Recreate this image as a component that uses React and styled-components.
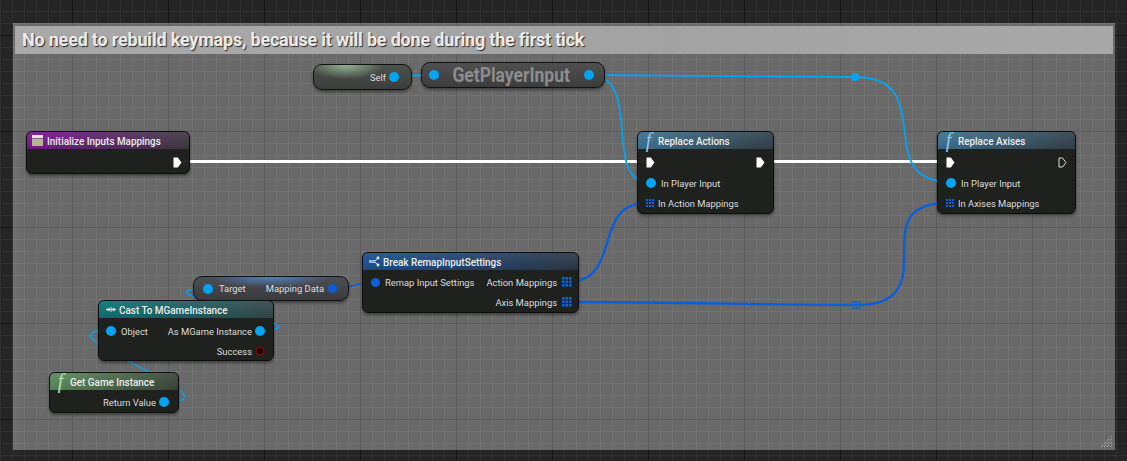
import React from 'react';
import styled, { createGlobalStyle } from 'styled-components';

const dataBlue = '#03a4f4';
const arrayBlue = '#0a5fd8';

const GlobalStyle = createGlobalStyle`
  html, body {
    margin: 0;
    padding: 0;
    background: #252525;
    overflow: hidden;
  }
`;

const Canvas = styled.div`
  position: relative;
  width: 1127px;
  height: 461px;
  overflow: hidden;
  font-family: Roboto, 'Liberation Sans', sans-serif;
  background-color: #252525;
  background-image:
    linear-gradient(90deg, #151515 1px, transparent 1px),
    linear-gradient(180deg, #151515 1px, transparent 1px),
    linear-gradient(90deg, #303030 1px, transparent 1px),
    linear-gradient(180deg, #303030 1px, transparent 1px);
  background-size: 96px 96px, 96px 96px, 12px 12px, 12px 12px;
  background-position: 72px 0, 0 35px, 0 0, 0 11px;
`;

const CommentBox = styled.div`
  position: absolute;
  left: 13px;
  top: 23px;
  width: 1102px;
  height: 427px;
  box-sizing: border-box;
  padding: 3px 2px;
  background-color: #696969;
  background-image:
    linear-gradient(90deg, #5b5b5b 1px, transparent 1px),
    linear-gradient(180deg, #5b5b5b 1px, transparent 1px),
    linear-gradient(90deg, #737373 1px, transparent 1px),
    linear-gradient(180deg, #737373 1px, transparent 1px);
  background-size: 96px 96px, 96px 96px, 12px 12px, 12px 12px;
  background-position: 59px 0, 0 12px, 11px 0, 0 0;
  box-shadow: inset 9px 0 8px -5px rgba(255, 255, 255, 0.07);
`;

const CommentTitle = styled.div`
  height: 28px;
  line-height: 28px;
  padding-left: 7px;
  font-size: 18px;
  font-weight: 700;
  letter-spacing: -0.2px;
  color: #ebebeb;
  text-shadow: 1px 1px 1px #2a2a2a;
  background: linear-gradient(90deg, #a9a9a9, #a2a2a2 60%, #a8a8a8);
`;

const ResizeGrip = styled.svg`
  position: absolute;
  right: 2px;
  bottom: 2px;
`;

const WireLayer = styled.svg`
  position: absolute;
  left: 0;
  top: 0;
`;

const Node = styled.div`
  position: absolute;
  left: ${(p) => p.$x}px;
  top: ${(p) => p.$y}px;
  width: ${(p) => p.$w}px;
  height: ${(p) => p.$h}px;
  box-sizing: border-box;
  display: flex;
  flex-direction: column;
  border: 1px solid #0d0d0d;
  border-radius: 6px;
  background: rgba(28, 30, 28, 0.96);
  box-shadow: 0 2px 3px rgba(0, 0, 0, 0.4);
`;

const Header = styled.div`
  height: 17px;
  flex: none;
  display: flex;
  align-items: center;
  gap: ${(p) => p.$gap || 4}px;
  padding-left: ${(p) => p.$pad || 7}px;
  border-radius: 5px 5px 0 0;
  background:
    linear-gradient(180deg, rgba(255, 255, 255, 0.07), rgba(0, 0, 0, 0.08)),
    linear-gradient(90deg, ${(p) => p.$from}, ${(p) => p.$to});
`;

const HeaderTitle = styled.span`
  padding-top: 1px;
  font-size: 11px;
  font-weight: 500;
  color: #ededed;
  white-space: nowrap;
  transform: scaleX(0.9);
  transform-origin: left center;
`;

const FuncGlyph = styled.span`
  font-family: 'Liberation Serif', serif;
  font-style: italic;
  font-size: 20px;
  line-height: 17px;
  width: 11px;
  text-align: center;
  color: ${(p) => p.$color};
`;

const Body = styled.div`
  flex: 1;
  display: flex;
  flex-direction: column;
  padding-top: ${(p) => p.$top ?? 3}px;
`;

const Row = styled.div`
  height: ${(p) => p.$h || 20}px;
  flex: none;
  display: flex;
  align-items: center;
  justify-content: space-between;
  padding: 0 ${(p) => p.$right ?? 8}px 0 ${(p) => p.$left ?? 8}px;
`;

const Side = styled.div`
  display: flex;
  align-items: center;
  gap: ${(p) => p.$gap ?? 5}px;
  margin-left: ${(p) => (p.$end ? 'auto' : '0')};
`;

const Label = styled.span`
  font-size: 9.4px;
  color: #dedede;
  white-space: nowrap;
`;

const Pin = styled.span`
  display: block;
  flex: none;
  width: ${(p) => p.$size || 10}px;
  height: ${(p) => p.$size || 10}px;
  border-radius: 50%;
  background: ${(p) => p.$color || dataBlue};
`;

const RingPin = styled(Pin)`
  box-sizing: border-box;
  background: #1a0505;
  border: 2px solid #6b0c0c;
`;

const Pure = styled.div`
  position: absolute;
  left: ${(p) => p.$x}px;
  top: ${(p) => p.$y}px;
  width: ${(p) => p.$w}px;
  height: ${(p) => p.$h}px;
  box-sizing: border-box;
  display: flex;
  align-items: center;
  justify-content: space-between;
  padding: 0 ${(p) => p.$right || 7}px 0 ${(p) => p.$left || 7}px;
  border: 1px solid #111;
  border-radius: 9px;
  box-shadow: 0 2px 3px rgba(0, 0, 0, 0.4);
  background: ${(p) => p.$bg};
`;

const PureTitle = styled.span`
  font-size: 20px;
  font-weight: 700;
  color: #8d8d8d;
  white-space: nowrap;
  transform: scaleX(0.875);
`;

function ExecPin({ hollow }) {
  return (
    <svg width="9" height="11" viewBox="0 0 9 11" style={{ flex: 'none' }}>
      <path
        d={hollow ? 'M1 1H4.5L8 5.5L4.5 10H1Z' : 'M.5 .5H4.8L8.5 5.5L4.8 10.5H.5Z'}
        fill={hollow ? 'none' : '#fff'}
        stroke={hollow ? '#ddd' : 'none'}
        strokeWidth="1"
      />
    </svg>
  );
}

function ArrayPin({ wide }) {
  const cells = wide ? [0, 3.5, 7] : [0, 3, 6];
  const size = wide ? 10 : 8;
  return (
    <svg width={size} height={size} viewBox={`0 0 ${size} ${size}`} style={{ flex: 'none' }}>
      {cells.map((y) =>
        cells.map((x) => (
          <rect key={`${x}-${y}`} x={x} y={y} width={wide ? 2.6 : 2} height={wide ? 2.6 : 2} fill="#0d62dc" />
        ))
      )}
    </svg>
  );
}

function EventIcon() {
  return (
    <svg width="11" height="11" viewBox="0 0 11 11">
      <rect width="11" height="3" fill="#e8e4d4" />
      <rect y="3.6" width="11" height="7.4" fill="#b8b292" />
    </svg>
  );
}

function BreakIcon() {
  return (
    <svg width="11" height="11" viewBox="0 0 11 11">
      <path d="M0 4h6v3H0Z" fill="#8fb0dc" />
      <circle cx="9" cy="2" r="1.4" fill="#e4ecf6" />
      <circle cx="9" cy="9" r="1.4" fill="#e4ecf6" />
      <path d="M6 5L8.4 2.4M6 6L8.4 8.6" stroke="#e4ecf6" fill="none" />
    </svg>
  );
}

function CastIcon() {
  return (
    <svg width="10" height="7" viewBox="0 0 12 7">
      <path d="M0 2.5H3V1L6 3.5L3 6V4.5H0Z" fill="#eee" />
      <path d="M6.5 2.5H9V1L12 3.5L9 6V4.5H6.5Z" fill="#eee" />
      <rect x="5.6" y="0.5" width="1" height="6" fill="#eee" />
    </svg>
  );
}

function Wires() {
  return (
    <WireLayer width="1127" height="461" viewBox="0 0 1127 461" fill="none">
      <g stroke="#fff" strokeWidth="3">
        <path d="M183 161.5H646" />
        <path d="M771 161.5H946" />
      </g>
      <g stroke={dataBlue} strokeWidth="1.8">
        <path d="M394 76C410 76 418 75 434 75" />
        <path d="M589 75C700 75 760 77 855 77" />
        <path d="M855 77C940 77 870 182 950 182" />
        <path d="M589 75C645 75 600 183 651 183" />
        <path d="M165 402C250 402 25 330 110 330" strokeWidth="1.4" />
        <path d="M259 330C345 330 120 289 206 289" strokeWidth="1.4" />
      </g>
      <g stroke={arrayBlue} strokeWidth="2.4">
        <path d="M566 282C625 282 590 203 647 203" />
        <path d="M566 302C690 302 760 305 856 305" />
        <path d="M856 305C950 305 860 203 947 203" />
        <path d="M333 289C352 289 355 282 373 282" strokeWidth="1.6" />
      </g>
      <circle cx="855" cy="77" r="4" fill={dataBlue} />
      <g fill="#0d62dc">
        {[301, 304, 307].map((y) =>
          [852, 855, 858].map((x) => <rect key={`${x}-${y}`} x={x} y={y} width="2.2" height="2.2" />)
        )}
      </g>
    </WireLayer>
  );
}

export default function App() {
  return (
    <Canvas>
      <GlobalStyle />
      <CommentBox>
        <CommentTitle>No need to rebuild keymaps, because it will be done during the first tick</CommentTitle>
        <ResizeGrip width="12" height="12" viewBox="0 0 12 12">
          <path d="M0 11L11 0M3 11L11 3M6 11L11 6M9 11L11 9" stroke="#c8c8c8" strokeWidth="1" strokeDasharray="1 1" />
        </ResizeGrip>
      </CommentBox>

      <Wires />

      <Node $x={26} $y={131} $w={164} $h={43}>
        <Header $from="#7a1690" $to="#3f3a42" $pad={5}>
          <EventIcon />
          <HeaderTitle>Initialize Inputs Mappings</HeaderTitle>
        </Header>
        <Body $top={3}>
          <Row $right={7}>
            <Side $end>
              <ExecPin />
            </Side>
          </Row>
        </Body>
      </Node>

      <Pure
        $x={313}
        $y={64}
        $w={99}
        $h={26}
        $right={12}
        $bg="radial-gradient(ellipse 38px 14px at 33% 0, #93b293, transparent), linear-gradient(180deg, #4c524c, #3b3d3b)"
      >
        <span />
        <Side $gap={3}>
          <Label>Self</Label>
          <Pin />
        </Side>
      </Pure>

      <Pure $x={421} $y={62} $w={184} $h={26} $left={7} $right={10} $bg="linear-gradient(180deg, #505050, #3c3c3c)">
        <Pin />
        <PureTitle>GetPlayerInput</PureTitle>
        <Pin />
      </Pure>

      <Node $x={637} $y={131} $w={137} $h={83}>
        <Header $from="#3d7291" $to="#33424c" $gap={4} $pad={5}>
          <FuncGlyph $color="#8fc6ea">f</FuncGlyph>
          <HeaderTitle>Replace Actions</HeaderTitle>
        </Header>
        <Body>
          <Row $h={21}>
            <ExecPin />
            <ExecPin />
          </Row>
          <Row>
            <Side>
              <Pin />
              <Label>In Player Input</Label>
            </Side>
          </Row>
          <Row>
            <Side $gap={4}>
              <ArrayPin />
              <Label>In Action Mappings</Label>
            </Side>
          </Row>
        </Body>
      </Node>

      <Node $x={937} $y={131} $w={139} $h={83}>
        <Header $from="#3d7291" $to="#33424c" $gap={4} $pad={5}>
          <FuncGlyph $color="#8fc6ea">f</FuncGlyph>
          <HeaderTitle>Replace Axises</HeaderTitle>
        </Header>
        <Body>
          <Row $h={21}>
            <ExecPin />
            <ExecPin hollow />
          </Row>
          <Row>
            <Side>
              <Pin />
              <Label>In Player Input</Label>
            </Side>
          </Row>
          <Row>
            <Side $gap={4}>
              <ArrayPin />
              <Label>In Axises Mappings</Label>
            </Side>
          </Row>
        </Body>
      </Node>

      <Node $x={362} $y={252} $w={217} $h={61}>
        <Header $from="#1c4f94" $to="#2b3846" $pad={6} $gap={3}>
          <BreakIcon />
          <HeaderTitle>Break RemapInputSettings</HeaderTitle>
        </Header>
        <Body $top={2}>
          <Row $right={6}>
            <Side>
              <Pin $color="#0d5ed6" $size={9} />
              <Label>Remap Input Settings</Label>
            </Side>
            <Side $gap={5}>
              <Label>Action Mappings</Label>
              <ArrayPin wide />
            </Side>
          </Row>
          <Row $right={6}>
            <Side $end $gap={5}>
              <Label>Axis Mappings</Label>
              <ArrayPin wide />
            </Side>
          </Row>
        </Body>
      </Node>

      <Pure
        $x={193}
        $y={276}
        $w={156}
        $h={25}
        $left={9}
        $right={11}
        $bg="radial-gradient(ellipse 60px 10px at 50% 0, #4f7fc4, transparent), linear-gradient(180deg, #4b4f55, #3a3a3c)"
      >
        <Side $gap={6}>
          <Pin />
          <Label>Target</Label>
        </Side>
        <Side $gap={4}>
          <Label>Mapping Data</Label>
          <Pin $color="#0d5ed6" $size={9} />
        </Side>
      </Pure>

      <Node $x={98} $y={300} $w={176} $h={61}>
        <Header $from="#0b7578" $to="#34484a" $pad={7} $gap={3}>
          <CastIcon />
          <HeaderTitle>Cast To MGameInstance</HeaderTitle>
        </Header>
        <Body $top={3}>
          <Row $left={7}>
            <Side>
              <Pin />
              <Label>Object</Label>
            </Side>
            <Side $gap={3}>
              <Label>As MGame Instance</Label>
              <Pin />
            </Side>
          </Row>
          <Row>
            <Side $end $gap={3}>
              <Label>Success</Label>
              <RingPin />
            </Side>
          </Row>
        </Body>
      </Node>

      <Node $x={49} $y={372} $w={130} $h={41}>
        <Header $from="#5c8c5c" $to="#3a463a" $gap={4} $pad={5}>
          <FuncGlyph $color="#b4e0b4">f</FuncGlyph>
          <HeaderTitle>Get Game Instance</HeaderTitle>
        </Header>
        <Body $top={2}>
          <Row $right={9}>
            <Side $end $gap={3}>
              <Label>Return Value</Label>
              <Pin />
            </Side>
          </Row>
        </Body>
      </Node>
    </Canvas>
  );
}
